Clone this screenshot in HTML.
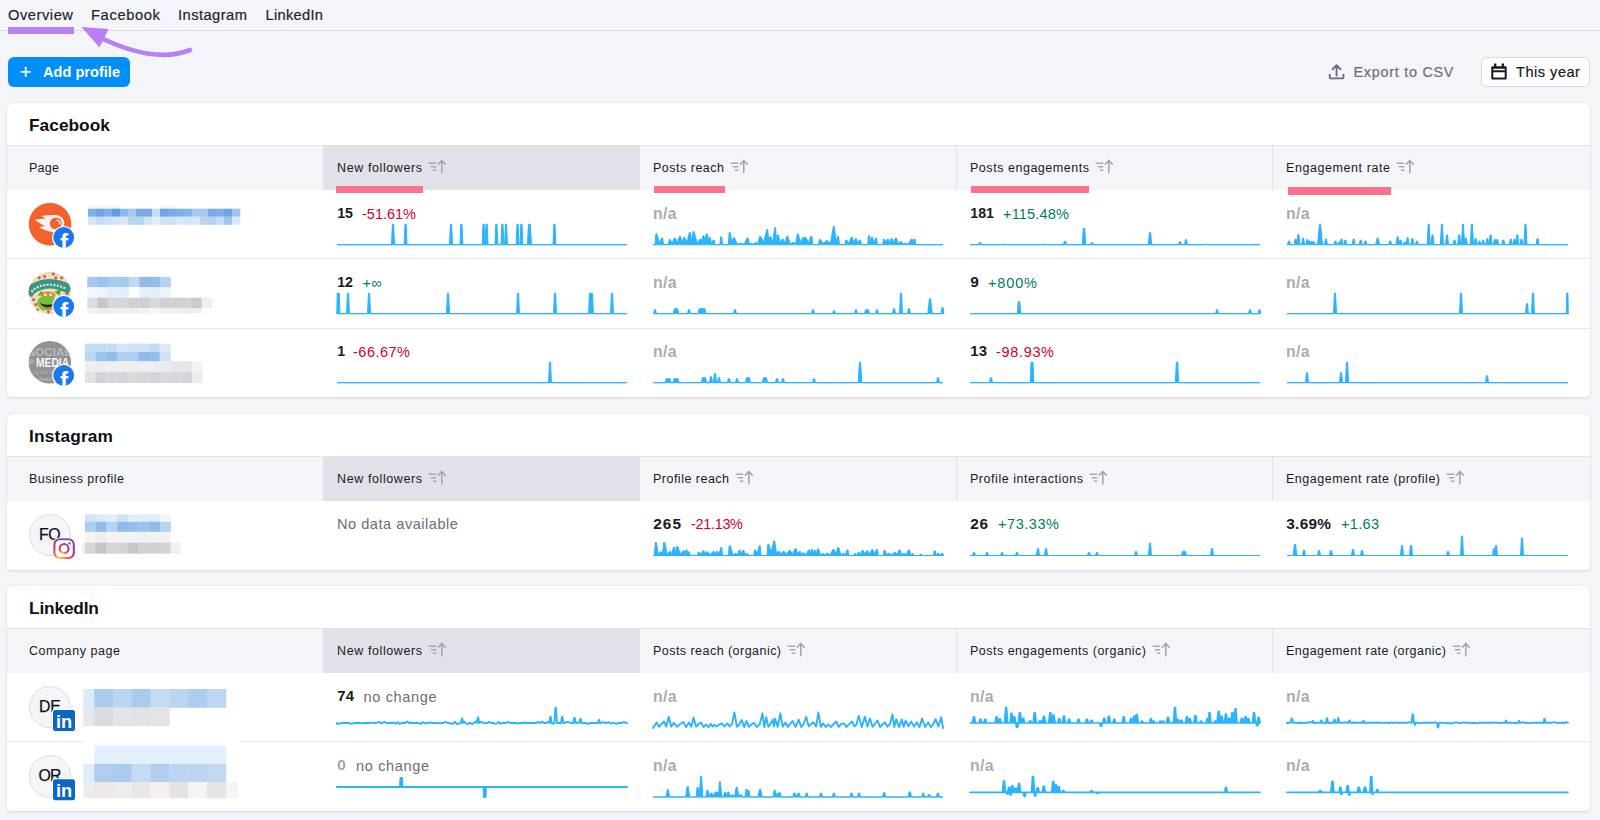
<!DOCTYPE html>
<html lang="en">
<head>
<meta charset="utf-8">
<title>Social Analytics Overview</title>
<style>
html,body{margin:0;padding:0;}
body{width:1600px;height:820px;position:relative;overflow:hidden;background:#f4f5f9;font-family:"Liberation Sans",sans-serif;color:#191b23;}
.t{position:absolute;white-space:nowrap;line-height:20px;height:20px;}
.b{position:absolute;}
.med{-webkit-text-stroke:0.2px currentColor;}
.ini{-webkit-text-stroke:0.25px #0f1015;}
.card{position:absolute;background:#fff;border-radius:6px 6px 4px 4px;box-shadow:0 1px 3px rgba(25,27,35,.13),0 0 1px rgba(25,27,35,.08);}
svg{position:absolute;overflow:visible;}
</style>
</head>
<body>
<div class="b" style="left:0px;top:30px;width:1600px;height:1px;background:#d9dbe1;"></div>
<span class="t med" style="left:8px;top:5.3px;font-size:14.7px;color:#23252e;letter-spacing:0.534px;">Overview</span>
<span class="t med" style="left:91px;top:5.3px;font-size:14.7px;color:#23252e;letter-spacing:0.635px;">Facebook</span>
<span class="t med" style="left:178px;top:5.3px;font-size:14.7px;color:#23252e;letter-spacing:0.455px;">Instagram</span>
<span class="t med" style="left:265.5px;top:5.3px;font-size:14.7px;color:#23252e;letter-spacing:0.275px;">LinkedIn</span>
<div class="b" style="left:8px;top:27px;width:66px;height:6.5px;background:#b880f6;"></div>
<svg style="left:70px;top:20px" width="130" height="40" viewBox="70 20 130 40"><path d="M190,50 C160,62 125,50 97,36" fill="none" stroke="#b880f6" stroke-width="4.6" stroke-linecap="round"/><path d="M81.5,27 L108.5,29 L99.5,47.5 Z" fill="#b880f6"/></svg>
<div class="b" style="left:8px;top:57px;width:122px;height:30px;background:#008ff8;border-radius:6px;"></div>
<svg style="left:19px;top:65px" width="12" height="12" viewBox="-0.7 -0.8 12 12"><path d="M6,1 V11 M1,6 H11" stroke="#fff" stroke-width="1.8" fill="none"/></svg>
<span class="t " style="left:43px;top:62px;font-size:14.5px;color:#fff;font-weight:700;letter-spacing:0.048px;">Add profile</span>
<svg style="left:1327px;top:62px" width="20" height="20" viewBox="0 0 20 20"><path d="M9.55,13.6 V3.6 M5.5,7.2 L9.55,3.2 L13.6,7.2 M2.7,12.6 V15.4 Q2.7,16.4 3.7,16.4 H15.4 Q16.4,16.4 16.4,15.4 V12.6" fill="none" stroke="#6c6e79" stroke-width="1.9" stroke-linecap="round" stroke-linejoin="round"/></svg>
<span class="t med" style="left:1353.5px;top:62px;font-size:14.4px;color:#6c6e79;letter-spacing:0.730px;">Export to CSV</span>
<div class="b" style="left:1481px;top:57px;width:108.6px;height:30px;background:#fff;border-radius:6px;box-sizing:border-box;border:1px solid #dcdde4;"></div>
<svg style="left:1490px;top:62px" width="18" height="18" viewBox="0 0 18 18"><path d="M2.3,5.3 H15.7 V16.4 H2.3 Z M2.3,9.2 H15.7" fill="none" stroke="#191b23" stroke-width="2" stroke-linejoin="round"/><path d="M5.2,1.6 V5 M12.8,1.6 V5" stroke="#191b23" stroke-width="2.3" fill="none"/><rect x="2.3" y="5.3" width="13.4" height="1.4" fill="#191b23"/></svg>
<span class="t med" style="left:1516px;top:62px;font-size:14.6px;color:#191b23;letter-spacing:0.495px;">This year</span>
<div class="card" style="left:7px;top:103px;width:1583px;height:294px"></div>
<span class="t " style="left:29px;top:115.4px;font-size:17.3px;color:#0e0f14;font-weight:700;letter-spacing:0.035px;">Facebook</span>
<div class="b" style="left:7px;top:145px;width:1583px;height:45px;background:#e0e1e9;"></div>
<div class="b" style="left:7px;top:146px;width:1583px;height:44px;background:#f4f5f9;"></div>
<div class="b" style="left:323px;top:146px;width:317px;height:44px;background:#e0e1e9;"></div>
<div class="b" style="left:956px;top:146px;width:1px;height:44px;background:#e0e1e9;"></div>
<div class="b" style="left:1272px;top:146px;width:1px;height:44px;background:#e0e1e9;"></div>
<span class="t " style="left:29px;top:158px;font-size:12.5px;color:#191b23;letter-spacing:0.269px;">Page</span>
<span class="t " style="left:337px;top:158px;font-size:12.5px;color:#191b23;letter-spacing:0.600px;">New followers</span>
<svg style="left:428px;top:158px" width="18" height="16" viewBox="-0.3 -0.6 18 16"><path d="M0.4,4.6 H8 M2.5,8.2 H8 M4.6,11.7 H8" stroke="#a6a9b4" stroke-width="1.6" fill="none"/><path d="M13.5,14.2 V2 M10,5.6 L13.5,1.8 L17,5.6" stroke="#a0a3af" stroke-width="1.5" fill="none" stroke-linecap="round" stroke-linejoin="round"/></svg>
<span class="t " style="left:653px;top:158px;font-size:12.5px;color:#191b23;letter-spacing:0.500px;">Posts reach</span>
<svg style="left:730px;top:158px" width="18" height="16" viewBox="-0.3 -0.6 18 16"><path d="M0.4,4.6 H8 M2.5,8.2 H8 M4.6,11.7 H8" stroke="#a6a9b4" stroke-width="1.6" fill="none"/><path d="M13.5,14.2 V2 M10,5.6 L13.5,1.8 L17,5.6" stroke="#a0a3af" stroke-width="1.5" fill="none" stroke-linecap="round" stroke-linejoin="round"/></svg>
<span class="t " style="left:970px;top:158px;font-size:12.5px;color:#191b23;letter-spacing:0.532px;">Posts engagements</span>
<svg style="left:1095px;top:158px" width="18" height="16" viewBox="-0.3 -0.6 18 16"><path d="M0.4,4.6 H8 M2.5,8.2 H8 M4.6,11.7 H8" stroke="#a6a9b4" stroke-width="1.6" fill="none"/><path d="M13.5,14.2 V2 M10,5.6 L13.5,1.8 L17,5.6" stroke="#a0a3af" stroke-width="1.5" fill="none" stroke-linecap="round" stroke-linejoin="round"/></svg>
<span class="t " style="left:1286px;top:158px;font-size:12.5px;color:#191b23;letter-spacing:0.579px;">Engagement rate</span>
<svg style="left:1396px;top:158px" width="18" height="16" viewBox="-0.3 -0.6 18 16"><path d="M0.4,4.6 H8 M2.5,8.2 H8 M4.6,11.7 H8" stroke="#a6a9b4" stroke-width="1.6" fill="none"/><path d="M13.5,14.2 V2 M10,5.6 L13.5,1.8 L17,5.6" stroke="#a0a3af" stroke-width="1.5" fill="none" stroke-linecap="round" stroke-linejoin="round"/></svg>
<div class="b" style="left:336px;top:185.7px;width:86.5px;height:7.3px;background:#fc728b;"></div>
<div class="b" style="left:654px;top:186px;width:71px;height:7.3px;background:#fc728b;"></div>
<div class="b" style="left:971px;top:186px;width:117.8px;height:7.3px;background:#fc728b;"></div>
<div class="b" style="left:1288px;top:187.4px;width:103.3px;height:7.3px;background:#fc728b;"></div>
<div class="b" style="left:7px;top:258px;width:1583px;height:1px;background:#e6e7ec;"></div>
<div class="b" style="left:7px;top:328px;width:1583px;height:1px;background:#e6e7ec;"></div>
<svg style="left:28px;top:202px" width="42.6" height="42.6" viewBox="-0.7 -0.8 42.6 42.6"><circle cx="21.3" cy="21.3" r="21.3" fill="#f4622c"/><path d="M12.4,13.2 C18,12.2 23,12 27.1,12.1 L25,29.4 C19.5,29 14,27.2 10.6,24.5 L16.1,23 C12,21.5 9,19.5 6.2,16.8 L16.8,15.7 Z" fill="#f1f1f3"/><circle cx="27.1" cy="20.8" r="8.6" fill="#f1f1f3"/><circle cx="27.1" cy="20.8" r="6" fill="#f4622c"/><path d="M28.3,17.3 C30.3,17.9 31.3,19.5 31.5,21.2" fill="none" stroke="#f6f0ee" stroke-width="1.3" stroke-linecap="round"/></svg>
<svg style="left:28px;top:271px" width="42.6" height="42.6" viewBox="-0.5 -0.8 42.6 42.6"><defs><clipPath id="tmc"><circle cx="21.3" cy="21.3" r="21.3"/></clipPath></defs><g clip-path="url(#tmc)"><rect width="43" height="43" fill="#ece0b8"/><circle cx="10.7" cy="6" r="1.6" fill="#d4604f"/><circle cx="16.2" cy="4.7" r="1.6" fill="#d4604f"/><circle cx="24.8" cy="2.1" r="1.6" fill="#d4604f"/><circle cx="27.3" cy="6" r="1.6" fill="#d4604f"/><circle cx="33.3" cy="6" r="1.6" fill="#d4604f"/><circle cx="5.1" cy="27.8" r="1.6" fill="#d4604f"/><circle cx="7.3" cy="32.9" r="1.6" fill="#d4604f"/><circle cx="14.5" cy="37.1" r="1.6" fill="#d4604f"/><circle cx="3" cy="23.5" r="1.6" fill="#d4604f"/><circle cx="37" cy="30" r="1.6" fill="#d4604f"/><circle cx="30" cy="38" r="1.6" fill="#d4604f"/><circle cx="20" cy="40" r="1.6" fill="#d4604f"/><circle cx="38.5" cy="22" r="1.6" fill="#d4604f"/><circle cx="33" cy="26" r="1.6" fill="#d4604f"/><circle cx="9" cy="38" r="1.6" fill="#d4604f"/><path d="M-1,22 C8,11 24,8 42,18" fill="none" stroke="#3d9485" stroke-width="9.5"/><path d="M3,20 C10,12.5 23,10 38,17" fill="none" stroke="#d6eadb" stroke-width="2.2" stroke-dasharray="2 1.4"/><path d="M9,24 L13,19 L17,23 Z M26,20 L33,17 L31,24 Z" fill="#5aa53a"/><ellipse cx="19.5" cy="23.2" rx="7.5" ry="3.6" fill="#e2863c"/><ellipse cx="18.5" cy="31" rx="10" ry="7.6" fill="#78c038"/><path d="M11.5,31 C15,37.5 23,37.5 27,31 C22,33.5 16,33.5 11.5,31 Z" fill="#2b2a18"/><path d="M15.5,35.3 C18,36.8 21,36.8 23.5,35.3" stroke="#e8705a" stroke-width="1.3" fill="none"/><circle cx="16.8" cy="23" r="1.3" fill="#fff"/><circle cx="22.2" cy="23" r="1.3" fill="#fff"/></g></svg>
<svg style="left:28px;top:341px" width="42.6" height="42.6" viewBox="-0.5 0 42.6 42.6"><defs><clipPath id="mdc"><circle cx="21.3" cy="21.3" r="21.3"/></clipPath></defs><g clip-path="url(#mdc)" font-family="Liberation Sans, sans-serif" font-weight="700"><rect width="43" height="43" fill="#929295"/><text x="-1" y="14.6" font-size="11.5" fill="#b9b9bc" textLength="44" lengthAdjust="spacingAndGlyphs">SOCIAL</text><text x="7.6" y="25.6" font-size="12.4" fill="#f7f7f8" textLength="33" lengthAdjust="spacingAndGlyphs">MEDIA</text><text x="0" y="22.5" font-size="6" fill="#c4c4c7">@</text><text x="4" y="33" font-size="5.5" fill="#a9a9ac" textLength="26" lengthAdjust="spacingAndGlyphs">tag web blog</text><text x="6" y="40" font-size="6" fill="#b3b3b6" textLength="22" lengthAdjust="spacingAndGlyphs">share</text></g></svg>
<svg style="left:51px;top:225px" width="24" height="24" viewBox="-0.7 -0.5 24 24"><defs><clipPath id="fbc237"><circle cx="12" cy="12" r="10.4"/></clipPath></defs><circle cx="12" cy="12" r="11.6" fill="#fff"/><circle cx="12" cy="12" r="10.4" fill="#1877f2"/><text clip-path="url(#fbc237)" x="12.5" y="25" font-family="Liberation Sans, sans-serif" font-weight="700" font-size="24.5" fill="#fff" text-anchor="middle">f</text></svg>
<svg style="left:51px;top:294px" width="24" height="24" viewBox="-0.7 -0.5 24 24"><defs><clipPath id="fbc306"><circle cx="12" cy="12" r="10.4"/></clipPath></defs><circle cx="12" cy="12" r="11.6" fill="#fff"/><circle cx="12" cy="12" r="10.4" fill="#1877f2"/><text clip-path="url(#fbc306)" x="12.5" y="25" font-family="Liberation Sans, sans-serif" font-weight="700" font-size="24.5" fill="#fff" text-anchor="middle">f</text></svg>
<svg style="left:51px;top:363px" width="24" height="24" viewBox="-0.7 -0.5 24 24"><defs><clipPath id="fbc375"><circle cx="12" cy="12" r="10.4"/></clipPath></defs><circle cx="12" cy="12" r="11.6" fill="#fff"/><circle cx="12" cy="12" r="10.4" fill="#1877f2"/><text clip-path="url(#fbc375)" x="12.5" y="25" font-family="Liberation Sans, sans-serif" font-weight="700" font-size="24.5" fill="#fff" text-anchor="middle">f</text></svg>
<svg style="left:88px;top:206px;filter:blur(0.5px)" width="152" height="18.3" viewBox="0 -0.2 152 18.3"><rect x="0" y="0" width="8.3" height="2.8" fill="#f1f6fc"/><rect x="8" y="0" width="8.3" height="2.8" fill="#f1f6fc"/><rect x="16" y="0" width="8.3" height="2.8" fill="#f1f6fc"/><rect x="24" y="0" width="8.3" height="2.8" fill="#f1f6fc"/><rect x="72" y="0" width="8.3" height="2.8" fill="#f1f6fc"/><rect x="80" y="0" width="8.3" height="2.8" fill="#f1f6fc"/><rect x="0" y="2.5" width="8.3" height="8.2" fill="#7fb0e8"/><rect x="8" y="2.5" width="8.3" height="8.2" fill="#6fa5e4"/><rect x="16" y="2.5" width="8.3" height="8.2" fill="#7db0e8"/><rect x="24" y="2.5" width="8.3" height="8.2" fill="#5f9be0"/><rect x="32" y="2.5" width="8.3" height="8.2" fill="#8ab8ea"/><rect x="40" y="2.5" width="8.3" height="8.2" fill="#a5c8ef"/><rect x="48" y="2.5" width="8.3" height="8.2" fill="#7aade6"/><rect x="56" y="2.5" width="8.3" height="8.2" fill="#78abe5"/><rect x="64" y="2.5" width="8.3" height="8.2" fill="#c5dcf5"/><rect x="72" y="2.5" width="8.3" height="8.2" fill="#6fa5e4"/><rect x="80" y="2.5" width="8.3" height="8.2" fill="#7aade6"/><rect x="88" y="2.5" width="8.3" height="8.2" fill="#7fb0e8"/><rect x="96" y="2.5" width="8.3" height="8.2" fill="#85b4e9"/><rect x="104" y="2.5" width="8.3" height="8.2" fill="#a8caf0"/><rect x="112" y="2.5" width="8.3" height="8.2" fill="#a5c8ef"/><rect x="120" y="2.5" width="8.3" height="8.2" fill="#7aade6"/><rect x="128" y="2.5" width="8.3" height="8.2" fill="#7fb0e8"/><rect x="136" y="2.5" width="8.3" height="8.2" fill="#6fa5e4"/><rect x="144" y="2.5" width="8.3" height="8.2" fill="#9fc4ee"/><rect x="0" y="10.4" width="8.3" height="8.2" fill="#d3e4f7"/><rect x="8" y="10.4" width="8.3" height="8.2" fill="#c6dcf5"/><rect x="16" y="10.4" width="8.3" height="8.2" fill="#cfe1f6"/><rect x="24" y="10.4" width="8.3" height="8.2" fill="#d3e4f7"/><rect x="32" y="10.4" width="8.3" height="8.2" fill="#d9e8f8"/><rect x="40" y="10.4" width="8.3" height="8.2" fill="#bcd5f2"/><rect x="48" y="10.4" width="8.3" height="8.2" fill="#b8d3f2"/><rect x="56" y="10.4" width="8.3" height="8.2" fill="#d3e4f7"/><rect x="64" y="10.4" width="8.3" height="8.2" fill="#e4eefa"/><rect x="72" y="10.4" width="8.3" height="8.2" fill="#cfe1f6"/><rect x="80" y="10.4" width="8.3" height="8.2" fill="#cfe1f6"/><rect x="88" y="10.4" width="8.3" height="8.2" fill="#d9e8f8"/><rect x="96" y="10.4" width="8.3" height="8.2" fill="#d3e4f7"/><rect x="104" y="10.4" width="8.3" height="8.2" fill="#d9e8f8"/><rect x="112" y="10.4" width="8.3" height="8.2" fill="#bcd5f2"/><rect x="120" y="10.4" width="8.3" height="8.2" fill="#b5d0f0"/><rect x="128" y="10.4" width="8.3" height="8.2" fill="#c6dcf5"/><rect x="136" y="10.4" width="8.3" height="8.2" fill="#9fc4ee"/><rect x="144" y="10.4" width="8.3" height="8.2" fill="#d9e8f8"/></svg>
<svg style="left:87px;top:276px;filter:blur(0.5px)" width="124.8" height="36.5" viewBox="-0.3 -0.8 124.8 36.5"><rect x="0" y="0" width="10.7" height="10.7" fill="#a5c8ef"/><rect x="10.4" y="0" width="10.7" height="10.7" fill="#9ac2ec"/><rect x="20.8" y="0" width="10.7" height="10.7" fill="#a5ccee"/><rect x="31.2" y="0" width="10.7" height="10.7" fill="#a5ccee"/><rect x="41.6" y="0" width="10.7" height="10.7" fill="#bfd9f3"/><rect x="52" y="0" width="10.7" height="10.7" fill="#90bbe9"/><rect x="62.4" y="0" width="10.7" height="10.7" fill="#93bdea"/><rect x="72.8" y="0" width="10.7" height="10.7" fill="#b5d2f0"/><rect x="0" y="10.4" width="10.7" height="10.8" fill="#f3f7fc"/><rect x="10.4" y="10.4" width="10.7" height="10.8" fill="#eef4fb"/><rect x="20.8" y="10.4" width="10.7" height="10.8" fill="#e4eefa"/><rect x="31.2" y="10.4" width="10.7" height="10.8" fill="#e4eefa"/><rect x="41.6" y="10.4" width="10.7" height="10.8" fill="#ffffff"/><rect x="52" y="10.4" width="10.7" height="10.8" fill="#e6f0fa"/><rect x="62.4" y="10.4" width="10.7" height="10.8" fill="#e4eefa"/><rect x="72.8" y="10.4" width="10.7" height="10.8" fill="#eef4fb"/><rect x="0" y="20.9" width="10.7" height="10.9" fill="#dcdde1"/><rect x="10.4" y="20.9" width="10.7" height="10.9" fill="#c6c7cd"/><rect x="20.8" y="20.9" width="10.7" height="10.9" fill="#d5d6da"/><rect x="31.2" y="20.9" width="10.7" height="10.9" fill="#d5d6da"/><rect x="41.6" y="20.9" width="10.7" height="10.9" fill="#cfd0d5"/><rect x="52" y="20.9" width="10.7" height="10.9" fill="#cfd0d5"/><rect x="62.4" y="20.9" width="10.7" height="10.9" fill="#d8d9dd"/><rect x="72.8" y="20.9" width="10.7" height="10.9" fill="#d0d1d6"/><rect x="83.2" y="20.9" width="10.7" height="10.9" fill="#d0d1d6"/><rect x="93.6" y="20.9" width="10.7" height="10.9" fill="#d3d4d9"/><rect x="104" y="20.9" width="10.7" height="10.9" fill="#cacbd1"/><rect x="114.4" y="20.9" width="10.7" height="10.9" fill="#efeff3"/><rect x="0" y="31.5" width="10.7" height="5.3" fill="#f1f2f5"/><rect x="10.4" y="31.5" width="10.7" height="5.3" fill="#ecedf1"/><rect x="20.8" y="31.5" width="10.7" height="5.3" fill="#eef0f4"/><rect x="31.2" y="31.5" width="10.7" height="5.3" fill="#eef0f4"/><rect x="41.6" y="31.5" width="10.7" height="5.3" fill="#eef0f4"/><rect x="52" y="31.5" width="10.7" height="5.3" fill="#f1f2f5"/><rect x="62.4" y="31.5" width="10.7" height="5.3" fill="#f6f6f8"/><rect x="72.8" y="31.5" width="10.7" height="5.3" fill="#eef0f4"/><rect x="83.2" y="31.5" width="10.7" height="5.3" fill="#eef0f4"/><rect x="93.6" y="31.5" width="10.7" height="5.3" fill="#ecedf1"/><rect x="104" y="31.5" width="10.7" height="5.3" fill="#eef0f4"/></svg>
<svg style="left:84px;top:343px;filter:blur(0.5px)" width="117.7" height="39.2" viewBox="-0.8 -0.6 117.7 39.2"><rect x="0" y="0" width="11" height="8.7" fill="#c3dbf4"/><rect x="10.7" y="0" width="11" height="8.7" fill="#c3dbf4"/><rect x="21.4" y="0" width="11" height="8.7" fill="#c5dcf5"/><rect x="32.1" y="0" width="11" height="8.7" fill="#d6e6f8"/><rect x="42.8" y="0" width="11" height="8.7" fill="#cfe2f6"/><rect x="53.5" y="0" width="11" height="8.7" fill="#cfe2f6"/><rect x="64.2" y="0" width="11" height="8.7" fill="#c3dbf4"/><rect x="74.9" y="0" width="11" height="8.7" fill="#dfeaf9"/><rect x="0" y="8.4" width="11" height="9.6" fill="#bdd7f3"/><rect x="10.7" y="8.4" width="11" height="9.6" fill="#9cc3ec"/><rect x="21.4" y="8.4" width="11" height="9.6" fill="#8fbce9"/><rect x="32.1" y="8.4" width="11" height="9.6" fill="#b1cff0"/><rect x="42.8" y="8.4" width="11" height="9.6" fill="#b1cff0"/><rect x="53.5" y="8.4" width="11" height="9.6" fill="#8fbce9"/><rect x="64.2" y="8.4" width="11" height="9.6" fill="#93bdea"/><rect x="74.9" y="8.4" width="11" height="9.6" fill="#cfe2f6"/><rect x="0" y="17.7" width="11" height="11.2" fill="#eeeef1"/><rect x="10.7" y="17.7" width="11" height="11.2" fill="#ededf0"/><rect x="21.4" y="17.7" width="11" height="11.2" fill="#efedee"/><rect x="32.1" y="17.7" width="11" height="11.2" fill="#eeeef1"/><rect x="42.8" y="17.7" width="11" height="11.2" fill="#eeeef1"/><rect x="53.5" y="17.7" width="11" height="11.2" fill="#f0eeee"/><rect x="64.2" y="17.7" width="11" height="11.2" fill="#ededf0"/><rect x="74.9" y="17.7" width="11" height="11.2" fill="#ebebee"/><rect x="85.6" y="17.7" width="11" height="11.2" fill="#e6e6ea"/><rect x="96.3" y="17.7" width="11" height="11.2" fill="#e6e6ea"/><rect x="107" y="17.7" width="11" height="11.2" fill="#f3f3f6"/><rect x="0" y="28.6" width="11" height="10.9" fill="#e1e2e6"/><rect x="10.7" y="28.6" width="11" height="10.9" fill="#d3d4d9"/><rect x="21.4" y="28.6" width="11" height="10.9" fill="#d6d7dc"/><rect x="32.1" y="28.6" width="11" height="10.9" fill="#d3d4d9"/><rect x="42.8" y="28.6" width="11" height="10.9" fill="#d9dade"/><rect x="53.5" y="28.6" width="11" height="10.9" fill="#d6d7dc"/><rect x="64.2" y="28.6" width="11" height="10.9" fill="#d3d4d9"/><rect x="74.9" y="28.6" width="11" height="10.9" fill="#d9dade"/><rect x="85.6" y="28.6" width="11" height="10.9" fill="#d6d7dc"/><rect x="96.3" y="28.6" width="11" height="10.9" fill="#d3d4d9"/><rect x="107" y="28.6" width="11" height="10.9" fill="#ececf0"/></svg>
<span class="t " style="left:337.3px;top:203.4px;font-size:14.2px;color:#191b23;font-weight:700;letter-spacing:-0.094px;">15</span>
<span class="t " style="left:362px;top:203.6px;font-size:14.5px;color:#d1002f;letter-spacing:-0.001px;">-51.61%</span>
<span class="t " style="left:337.3px;top:272.4px;font-size:14.2px;color:#191b23;font-weight:700;letter-spacing:-0.094px;">12</span>
<span class="t " style="left:362.5px;top:272.6px;font-size:14.5px;color:#007c65;letter-spacing:0.195px;">+∞</span>
<span class="t " style="left:337.3px;top:341.4px;font-size:14.2px;color:#191b23;font-weight:700;letter-spacing:-1.197px;">1</span>
<span class="t " style="left:353px;top:341.6px;font-size:14.5px;color:#d1002f;letter-spacing:0.499px;">-66.67%</span>
<span class="t " style="left:653px;top:204px;font-size:15.8px;color:#a9abb6;font-weight:700;letter-spacing:0.336px;">n/a</span>
<span class="t " style="left:1286px;top:204px;font-size:15.8px;color:#a9abb6;font-weight:700;letter-spacing:0.336px;">n/a</span>
<span class="t " style="left:653px;top:273px;font-size:15.8px;color:#a9abb6;font-weight:700;letter-spacing:0.336px;">n/a</span>
<span class="t " style="left:1286px;top:273px;font-size:15.8px;color:#a9abb6;font-weight:700;letter-spacing:0.336px;">n/a</span>
<span class="t " style="left:653px;top:342px;font-size:15.8px;color:#a9abb6;font-weight:700;letter-spacing:0.336px;">n/a</span>
<span class="t " style="left:1286px;top:342px;font-size:15.8px;color:#a9abb6;font-weight:700;letter-spacing:0.336px;">n/a</span>
<span class="t " style="left:970.3px;top:203.4px;font-size:14.2px;color:#191b23;font-weight:700;letter-spacing:0.005px;">181</span>
<span class="t " style="left:1003px;top:203.6px;font-size:14.5px;color:#007c65;letter-spacing:0.196px;">+115.48%</span>
<span class="t " style="left:970.3px;top:272.4px;font-size:15.4px;color:#191b23;font-weight:700;letter-spacing:0.136px;">9</span>
<span class="t " style="left:988px;top:272.6px;font-size:14.5px;color:#007c65;letter-spacing:0.862px;">+800%</span>
<span class="t " style="left:970.3px;top:341.4px;font-size:14.93px;color:#191b23;font-weight:700;letter-spacing:0.128px;">13</span>
<span class="t " style="left:996px;top:341.6px;font-size:14.5px;color:#d1002f;letter-spacing:0.666px;">-98.93%</span>
<svg style="left:337px;top:218px" width="290" height="36" viewBox="0 -26.7 290 36"><path d="M0,0 L54.5,0.0 L55.4,-20.5 L56.6,-20.5 L57.5,0.0 L67.1,0.0 L68.0,-20.5 L69.2,-20.5 L70.0,0.0 L112.5,0.0 L113.4,-20.5 L114.6,-20.5 L115.5,0.0 L123.0,0.0 L123.8,-20.5 L125.0,-20.5 L125.9,0.0 L145.2,0.0 L146.0,-20.5 L147.2,-20.5 L148.0,0.0 L148.2,0.0 L149.0,-20.5 L150.2,-20.5 L151.0,0.0 L158.0,0.0 L158.8,-20.5 L160.0,-20.5 L160.8,0.0 L164.0,0.0 L164.8,-20.5 L166.0,-20.5 L166.8,0.0 L167.6,0.0 L168.4,-20.5 L169.6,-20.5 L170.4,0.0 L179.2,0.0 L180.0,-20.5 L181.2,-20.5 L182.0,0.0 L183.0,0.0 L183.8,-20.5 L185.0,-20.5 L185.8,0.0 L190.4,0.0 L191.5,-20.5 L193.3,-20.5 L194.4,0.0 L216.0,0.0 L216.8,-20.5 L218.0,-20.5 L218.8,0.0 L290,0 Z" fill="#2bb3ff" stroke="#2bb3ff" stroke-width="1" stroke-linejoin="round"/></svg>
<svg style="left:653px;top:218px" width="290" height="36" viewBox="0 -26.7 290 36"><path d="M0,0 L2.1,0.0 L2.9,-10.8 L3.9,-10.8 L6.3,-2.0 L8.7,-6.6 L9.7,-6.6 L10.5,0.0 L15.4,0.0 L16.2,-5.2 L17.2,-5.2 L19.2,-1.6 L21.3,-6.6 L22.3,-6.6 L24.4,-2.0 L26.5,-8.4 L27.5,-8.4 L29.1,-2.2 L30.7,-7.5 L31.7,-7.5 L34.0,-2.2 L36.3,-12.2 L37.3,-12.2 L38.7,-3.7 L40.1,-13.1 L41.1,-13.1 L44.1,-1.7 L47.1,-5.6 L48.1,-5.6 L49.0,-1.7 L49.9,-8.9 L50.9,-8.9 L52.0,-2.7 L53.2,-10.8 L54.2,-10.8 L55.1,-2.2 L56.0,-7.5 L57.0,-7.5 L58.6,-1.4 L60.2,-4.7 L61.2,-4.7 L62.0,0.0 L66.9,0.0 L67.7,-8.0 L68.7,-8.0 L69.5,0.0 L75.4,0.0 L76.2,-12.2 L77.2,-12.2 L78.8,-2.1 L80.4,-7.0 L81.4,-7.0 L84.4,-0.4 L87.4,-1.4 L88.4,-1.4 L91.2,-0.4 L94.0,-6.6 L95.0,-6.6 L96.6,-0.4 L98.2,-1.4 L99.2,-1.4 L100.8,-0.4 L102.4,-2.3 L103.4,-2.3 L105.0,-0.7 L106.6,-8.4 L107.6,-8.4 L110.7,-2.5 L113.7,-15.0 L114.7,-15.0 L115.8,-2.4 L116.9,-8.0 L117.9,-8.0 L119.8,-2.4 L121.6,-16.9 L122.6,-16.9 L123.5,-2.9 L124.4,-9.8 L125.4,-9.8 L127.2,-1.7 L129.1,-5.6 L130.1,-5.6 L131.9,-1.7 L133.8,-8.4 L134.8,-8.4 L137.4,-0.7 L139.9,-2.3 L140.9,-2.3 L142.6,-0.7 L144.3,-10.8 L145.3,-10.8 L147.4,-2.1 L149.5,-7.0 L150.5,-7.0 L151.2,-2.1 L151.8,-7.5 L152.8,-7.5 L155.4,-2.2 L157.9,-8.4 L158.9,-8.4 L159.7,0.0 L165.5,0.0 L166.3,-5.2 L167.3,-5.2 L170.4,-1.3 L173.4,-4.2 L174.4,-4.2 L177.4,-1.3 L180.4,-18.3 L181.4,-18.3 L183.0,-2.5 L184.6,-8.4 L185.6,-8.4 L186.4,0.0 L191.8,0.0 L192.6,-4.7 L193.6,-4.7 L195.9,-1.4 L198.2,-7.5 L199.2,-7.5 L200.8,-1.8 L202.4,-6.1 L203.4,-6.1 L205.0,-1.4 L206.6,-4.7 L207.6,-4.7 L208.4,0.0 L214.7,0.0 L215.5,-8.9 L216.5,-8.9 L217.4,-2.2 L218.4,-7.5 L219.4,-7.5 L221.0,-2.0 L222.6,-6.6 L223.6,-6.6 L224.4,0.0 L229.7,0.0 L230.5,-5.6 L231.5,-5.6 L232.9,-1.7 L234.3,-5.6 L235.3,-5.6 L236.7,-1.7 L238.0,-6.1 L239.0,-6.1 L240.7,-1.8 L242.3,-6.6 L243.3,-6.6 L245.4,-1.0 L247.4,-3.3 L248.4,-3.3 L249.8,-0.4 L251.2,-1.4 L252.2,-1.4 L255.2,-0.4 L258.2,-5.6 L259.2,-5.6 L260.1,-1.7 L261.0,-5.6 L262.0,-5.6 L262.8,0.0 L290,0 Z" fill="#2bb3ff" stroke="#2bb3ff" stroke-width="1" stroke-linejoin="round"/></svg>
<svg style="left:970px;top:218px" width="290" height="36" viewBox="0 -26.7 290 36"><path d="M0,0 L8.6,0.0 L9.4,-2.2 L10.6,-2.2 L11.4,0.0 L33.0,0.0 L34.4,-0.6 L35.6,-0.6 L37.0,0.0 L73.0,0.0 L74.4,-0.6 L75.6,-0.6 L77.0,0.0 L93.5,0.0 L94.4,-3.5 L95.6,-3.5 L96.5,0.0 L112.3,0.0 L113.3,-16.5 L114.7,-16.5 L115.7,0.0 L120.5,0.0 L121.4,-2.0 L122.6,-2.0 L123.5,0.0 L178.4,0.0 L179.3,-12.0 L180.7,-12.0 L181.6,0.0 L208.6,0.0 L209.4,-3.0 L210.6,-3.0 L211.4,0.0 L214.6,0.0 L215.4,-5.0 L216.6,-5.0 L217.4,0.0 L234.0,0.0 L235.4,-0.6 L236.6,-0.6 L238.0,0.0 L290,0 Z" fill="#2bb3ff" stroke="#2bb3ff" stroke-width="1" stroke-linejoin="round"/></svg>
<svg style="left:1287px;top:218px" width="281" height="36" viewBox="0 -26.7 281 36"><path d="M0,0 L0.5,0.0 L1.5,-3.7 L2.5,-3.7 L3.5,0.0 L7.1,0.0 L8.1,-5.6 L9.1,-5.6 L10.0,-1.2 L10.9,-10.3 L11.9,-10.3 L12.9,0.0 L14.6,0.0 L15.6,-6.6 L16.6,-6.6 L17.6,0.0 L18.8,0.0 L19.8,-5.2 L20.8,-5.2 L21.5,-0.8 L22.1,-3.7 L23.1,-3.7 L23.8,-0.7 L24.5,-3.3 L25.5,-3.3 L25.9,-0.6 L26.4,-2.8 L27.4,-2.8 L28.4,0.0 L30.5,0.0 L32.5,-20.6 L33.5,-20.6 L35.5,0.0 L37.5,0.0 L38.5,-5.6 L39.5,-5.6 L40.5,0.0 L46.9,0.0 L47.9,-3.7 L48.9,-3.7 L49.9,0.0 L50.7,0.0 L51.7,-2.8 L52.7,-2.8 L53.4,-0.6 L54.0,-5.6 L55.0,-5.6 L56.0,0.0 L56.8,0.0 L57.8,-4.7 L58.8,-4.7 L59.8,0.0 L65.2,0.0 L66.2,-5.6 L67.2,-5.6 L68.2,0.0 L72.2,0.0 L73.2,-4.7 L74.2,-4.7 L75.2,0.0 L76.9,0.0 L77.9,-3.7 L78.9,-3.7 L79.9,0.0 L88.6,0.0 L90.1,-6.6 L91.1,-6.6 L92.6,0.0 L101.7,0.0 L102.7,-3.7 L103.7,-3.7 L104.7,0.0 L109.2,0.0 L110.2,-8.0 L111.2,-8.0 L112.2,-1.0 L113.1,-4.7 L114.1,-4.7 L115.1,0.0 L116.3,0.0 L117.3,-2.8 L118.3,-2.8 L119.2,-0.6 L120.1,-7.0 L121.1,-7.0 L122.1,0.0 L123.8,0.0 L124.8,-6.1 L125.8,-6.1 L126.8,0.0 L128.5,0.0 L129.5,-3.7 L130.5,-3.7 L131.5,0.0 L140.2,0.0 L141.2,-20.6 L142.2,-20.6 L143.2,0.0 L144.0,0.0 L145.0,-9.8 L146.0,-9.8 L147.0,0.0 L153.4,0.0 L154.4,-20.6 L155.4,-20.6 L156.4,0.0 L158.5,0.0 L159.5,-9.8 L160.5,-9.8 L161.5,0.0 L166.0,0.0 L167.0,-4.7 L168.0,-4.7 L169.0,0.0 L170.7,0.0 L171.7,-9.8 L172.7,-9.8 L173.7,0.0 L174.5,0.0 L175.5,-20.6 L176.5,-20.6 L177.4,-1.5 L178.3,-6.6 L179.3,-6.6 L180.3,0.0 L183.4,0.0 L184.4,-20.6 L185.4,-20.6 L186.4,0.0 L187.1,0.0 L188.1,-6.1 L189.1,-6.1 L190.1,0.0 L190.9,0.0 L191.9,-3.7 L192.9,-3.7 L193.9,0.0 L194.6,0.0 L195.6,-4.7 L196.6,-4.7 L197.6,0.0 L198.8,0.0 L199.8,-6.1 L200.8,-6.1 L201.8,0.0 L202.1,0.0 L203.1,-9.8 L204.1,-9.8 L205.1,0.0 L206.3,0.0 L207.3,-5.2 L208.3,-5.2 L209.0,-1.1 L209.7,-5.2 L210.7,-5.2 L211.7,0.0 L214.8,0.0 L215.8,-4.7 L216.8,-4.7 L217.8,0.0 L222.3,0.0 L223.3,-5.6 L224.3,-5.6 L225.3,0.0 L226.0,0.0 L227.0,-5.6 L228.0,-5.6 L228.9,-1.2 L229.8,-9.8 L230.8,-9.8 L231.8,0.0 L233.0,0.0 L234.0,-5.6 L235.0,-5.6 L236.0,0.0 L237.0,0.0 L238.0,-20.6 L239.0,-20.6 L240.0,0.0 L249.0,0.0 L250.0,-6.1 L251.0,-6.1 L252.0,0.0 L281,0 Z" fill="#2bb3ff" stroke="#2bb3ff" stroke-width="1" stroke-linejoin="round"/></svg>
<svg style="left:337px;top:287px" width="290" height="36" viewBox="0 -26.7 290 36"><path d="M0,0 L-0.2,0.0 L0.2,-20.5 L2.4,-20.5 L2.8,0.0 L9.6,0.0 L10.4,-20.5 L11.6,-20.5 L12.4,0.0 L30.6,0.0 L31.4,-20.5 L32.6,-20.5 L33.5,0.0 L109.5,0.0 L110.4,-20.5 L111.6,-20.5 L112.5,0.0 L179.6,0.0 L180.4,-20.5 L181.6,-20.5 L182.4,0.0 L216.6,0.0 L217.4,-20.5 L218.6,-20.5 L219.4,0.0 L251.7,0.0 L252.4,-20.5 L255.6,-20.5 L256.3,0.0 L273.6,0.0 L274.4,-20.5 L275.6,-20.5 L276.4,0.0 L290,0 Z" fill="#2bb3ff" stroke="#2bb3ff" stroke-width="1" stroke-linejoin="round"/></svg>
<svg style="left:653px;top:287px" width="290" height="36" viewBox="0 -26.7 290 36"><path d="M0,0 L0.6,0.0 L1.4,-4.0 L2.6,-4.0 L3.5,0.0 L20.2,0.0 L21.5,-5.0 L24.5,-5.0 L25.8,0.0 L34.5,0.0 L35.4,-4.0 L36.6,-4.0 L37.5,0.0 L45.0,0.0 L46.2,-5.0 L51.8,-5.0 L53.0,0.0 L80.5,0.0 L81.4,-4.0 L82.6,-4.0 L83.5,0.0 L158.6,0.0 L159.4,-4.0 L160.6,-4.0 L161.4,0.0 L179.6,0.0 L180.4,-3.0 L181.6,-3.0 L182.4,0.0 L201.6,0.0 L202.4,-4.0 L203.6,-4.0 L204.4,0.0 L211.5,0.0 L212.5,-4.0 L215.5,-4.0 L216.5,0.0 L222.6,0.0 L223.4,-4.0 L224.6,-4.0 L225.4,0.0 L239.6,0.0 L240.4,-5.0 L241.6,-5.0 L242.4,0.0 L246.6,0.0 L247.4,-20.5 L248.6,-20.5 L249.4,0.0 L254.6,0.0 L255.4,-5.0 L256.6,-5.0 L257.4,0.0 L274.8,0.0 L276.4,-15.0 L277.6,-15.0 L279.2,0.0 L288.2,0.0 L288.9,-6.0 L290.1,-6.0 L290.8,0.0 L290,0 Z" fill="#2bb3ff" stroke="#2bb3ff" stroke-width="1" stroke-linejoin="round"/></svg>
<svg style="left:970px;top:287px" width="290" height="36" viewBox="0 -26.7 290 36"><path d="M0,0 L47.3,0.0 L48.2,-12.0 L49.8,-12.0 L50.7,0.0 L245.6,0.0 L246.4,-4.0 L247.6,-4.0 L248.4,0.0 L278.6,0.0 L279.4,-4.0 L280.6,-4.0 L281.4,0.0 L288.5,0.0 L288.9,-4.0 L290.1,-4.0 L290.5,0.0 L290,0 Z" fill="#2bb3ff" stroke="#2bb3ff" stroke-width="1" stroke-linejoin="round"/></svg>
<svg style="left:1287px;top:287px" width="281" height="36" viewBox="0 -26.7 281 36"><path d="M0,0 L46.5,0.0 L47.4,-20.5 L48.6,-20.5 L49.5,0.0 L172.6,0.0 L173.4,-20.5 L174.6,-20.5 L175.4,0.0 L238.6,0.0 L239.4,-10.0 L240.6,-10.0 L241.4,0.0 L244.6,0.0 L245.4,-20.5 L246.6,-20.5 L247.4,0.0 L279.3,0.0 L279.7,-20.5 L280.9,-20.5 L281.3,0.0 L281,0 Z" fill="#2bb3ff" stroke="#2bb3ff" stroke-width="1" stroke-linejoin="round"/></svg>
<svg style="left:337px;top:356px" width="290" height="36" viewBox="0 -26.7 290 36"><path d="M0,0 L211.6,0.0 L212.4,-20.5 L213.6,-20.5 L214.4,0.0 L290,0 Z" fill="#2bb3ff" stroke="#2bb3ff" stroke-width="1" stroke-linejoin="round"/></svg>
<svg style="left:653px;top:356px" width="290" height="36" viewBox="0 -26.7 290 36"><path d="M0,0 L12.0,0.0 L13.0,-4.0 L17.0,-4.0 L18.0,0.0 L20.0,0.0 L21.0,-4.0 L25.0,-4.0 L26.0,0.0 L48.5,0.0 L49.5,-5.0 L52.5,-5.0 L53.5,0.0 L56.5,0.0 L57.4,-6.0 L58.6,-6.0 L59.5,0.0 L60.5,0.0 L61.4,-9.0 L62.6,-9.0 L63.5,0.0 L64.5,0.0 L65.4,-5.0 L66.6,-5.0 L67.5,0.0 L74.5,0.0 L75.4,-4.0 L76.6,-4.0 L77.5,0.0 L82.5,0.0 L83.4,-4.0 L84.6,-4.0 L85.5,0.0 L92.5,0.0 L93.5,-5.0 L96.5,-5.0 L97.5,0.0 L109.5,0.0 L110.5,-5.0 L113.5,-5.0 L114.5,0.0 L122.5,0.0 L123.4,-4.0 L124.6,-4.0 L125.5,0.0 L128.6,0.0 L129.4,-4.0 L130.6,-4.0 L131.4,0.0 L159.6,0.0 L160.4,-4.0 L161.6,-4.0 L162.4,0.0 L205.2,0.0 L206.4,-20.5 L207.6,-20.5 L208.8,0.0 L283.6,0.0 L284.4,-5.0 L285.6,-5.0 L286.4,0.0 L290,0 Z" fill="#2bb3ff" stroke="#2bb3ff" stroke-width="1" stroke-linejoin="round"/></svg>
<svg style="left:970px;top:356px" width="290" height="36" viewBox="0 -26.7 290 36"><path d="M0,0 L19.6,0.0 L20.4,-5.0 L21.6,-5.0 L22.4,0.0 L60.2,0.0 L61.0,-20.5 L63.0,-20.5 L63.8,0.0 L205.4,0.0 L206.3,-20.5 L207.7,-20.5 L208.6,0.0 L290,0 Z" fill="#2bb3ff" stroke="#2bb3ff" stroke-width="1" stroke-linejoin="round"/></svg>
<svg style="left:1287px;top:356px" width="281" height="36" viewBox="0 -26.7 281 36"><path d="M0,0 L18.6,0.0 L19.4,-10.0 L20.6,-10.0 L21.4,0.0 L52.5,0.0 L53.4,-10.0 L54.6,-10.0 L55.5,0.0 L58.5,0.0 L59.4,-20.5 L60.6,-20.5 L61.5,0.0 L198.6,0.0 L199.4,-7.0 L200.6,-7.0 L201.4,0.0 L281,0 Z" fill="#2bb3ff" stroke="#2bb3ff" stroke-width="1" stroke-linejoin="round"/></svg>
<div class="card" style="left:7px;top:414px;width:1583px;height:156px"></div>
<span class="t " style="left:29px;top:426.4px;font-size:17.3px;color:#0e0f14;font-weight:700;letter-spacing:0.165px;">Instagram</span>
<div class="b" style="left:7px;top:456px;width:1583px;height:45px;background:#e0e1e9;"></div>
<div class="b" style="left:7px;top:457px;width:1583px;height:44px;background:#f4f5f9;"></div>
<div class="b" style="left:323px;top:457px;width:317px;height:44px;background:#e0e1e9;"></div>
<div class="b" style="left:956px;top:457px;width:1px;height:44px;background:#e0e1e9;"></div>
<div class="b" style="left:1272px;top:457px;width:1px;height:44px;background:#e0e1e9;"></div>
<span class="t " style="left:29px;top:469px;font-size:12.5px;color:#191b23;letter-spacing:0.451px;">Business profile</span>
<span class="t " style="left:337px;top:469px;font-size:12.5px;color:#191b23;letter-spacing:0.600px;">New followers</span>
<svg style="left:428px;top:469px" width="18" height="16" viewBox="-0.3 -0.6 18 16"><path d="M0.4,4.6 H8 M2.5,8.2 H8 M4.6,11.7 H8" stroke="#a6a9b4" stroke-width="1.6" fill="none"/><path d="M13.5,14.2 V2 M10,5.6 L13.5,1.8 L17,5.6" stroke="#a0a3af" stroke-width="1.5" fill="none" stroke-linecap="round" stroke-linejoin="round"/></svg>
<span class="t " style="left:653px;top:469px;font-size:12.5px;color:#191b23;letter-spacing:0.486px;">Profile reach</span>
<svg style="left:735px;top:469px" width="18" height="16" viewBox="-0.3 -0.6 18 16"><path d="M0.4,4.6 H8 M2.5,8.2 H8 M4.6,11.7 H8" stroke="#a6a9b4" stroke-width="1.6" fill="none"/><path d="M13.5,14.2 V2 M10,5.6 L13.5,1.8 L17,5.6" stroke="#a0a3af" stroke-width="1.5" fill="none" stroke-linecap="round" stroke-linejoin="round"/></svg>
<span class="t " style="left:970px;top:469px;font-size:12.5px;color:#191b23;letter-spacing:0.536px;">Profile interactions</span>
<svg style="left:1089px;top:469px" width="18" height="16" viewBox="-0.3 -0.6 18 16"><path d="M0.4,4.6 H8 M2.5,8.2 H8 M4.6,11.7 H8" stroke="#a6a9b4" stroke-width="1.6" fill="none"/><path d="M13.5,14.2 V2 M10,5.6 L13.5,1.8 L17,5.6" stroke="#a0a3af" stroke-width="1.5" fill="none" stroke-linecap="round" stroke-linejoin="round"/></svg>
<span class="t " style="left:1286px;top:469px;font-size:12.5px;color:#191b23;letter-spacing:0.511px;">Engagement rate (profile)</span>
<svg style="left:1446px;top:469px" width="18" height="16" viewBox="-0.3 -0.6 18 16"><path d="M0.4,4.6 H8 M2.5,8.2 H8 M4.6,11.7 H8" stroke="#a6a9b4" stroke-width="1.6" fill="none"/><path d="M13.5,14.2 V2 M10,5.6 L13.5,1.8 L17,5.6" stroke="#a0a3af" stroke-width="1.5" fill="none" stroke-linecap="round" stroke-linejoin="round"/></svg>
<div class="b" style="left:28.5px;top:513.8px;width:42.4px;height:42.4px;border-radius:50%;background:#f4f5f9;box-sizing:border-box;border:1px solid #dddee4"></div>
<span class="t ini" style="left:38.9px;top:524.6px;font-size:15.8px;color:#0f1015;letter-spacing:-0.341px;">FO</span>
<svg style="left:52px;top:537px" width="23" height="22" viewBox="-0.6 -0.6 23 22"><defs><radialGradient id="igg" cx="0.28" cy="1.05" r="1.25"><stop offset="0" stop-color="#fed576"/><stop offset="0.26" stop-color="#f47133"/><stop offset="0.5" stop-color="#e33062"/><stop offset="0.72" stop-color="#bc3081"/><stop offset="1" stop-color="#4c63d2"/></radialGradient></defs><rect x="0" y="0" width="23" height="22" rx="6.5" fill="#fff"/><rect x="1.8" y="1.6" width="19.4" height="18.8" rx="5.2" fill="none" stroke="url(#igg)" stroke-width="2.1"/><circle cx="11.5" cy="11" r="4.5" fill="none" stroke="url(#igg)" stroke-width="2"/><circle cx="16.9" cy="5.8" r="1.2" fill="#b8328a"/></svg>
<svg style="left:82px;top:514px;filter:blur(0.5px)" width="98.4" height="39.1" viewBox="0 -0.3 98.4 39.1"><rect x="3" y="0" width="11" height="7.8" fill="#d0e3f7"/><rect x="13.7" y="0" width="11" height="7.8" fill="#dceaf9"/><rect x="24.4" y="0" width="11" height="7.8" fill="#e0edfa"/><rect x="35.1" y="0" width="11" height="7.8" fill="#cfe2f6"/><rect x="45.8" y="0" width="11" height="7.8" fill="#e4effb"/><rect x="56.5" y="0" width="11" height="7.8" fill="#dfecfa"/><rect x="67.2" y="0" width="11" height="7.8" fill="#dfecfa"/><rect x="77.9" y="0" width="11" height="7.8" fill="#f3f5fa"/><rect x="3" y="7.5" width="11" height="10.3" fill="#aacdf0"/><rect x="13.7" y="7.5" width="11" height="10.3" fill="#8fbce9"/><rect x="24.4" y="7.5" width="11" height="10.3" fill="#b5d3f1"/><rect x="35.1" y="7.5" width="11" height="10.3" fill="#8fbce9"/><rect x="45.8" y="7.5" width="11" height="10.3" fill="#93beea"/><rect x="56.5" y="7.5" width="11" height="10.3" fill="#9dc4ec"/><rect x="67.2" y="7.5" width="11" height="10.3" fill="#8fbce9"/><rect x="77.9" y="7.5" width="11" height="10.3" fill="#b5d3f1"/><rect x="3" y="17.5" width="11" height="11.1" fill="#f5f3f3"/><rect x="13.7" y="17.5" width="11" height="11.1" fill="#ededf0"/><rect x="24.4" y="17.5" width="11" height="11.1" fill="#f3f3f6"/><rect x="35.1" y="17.5" width="11" height="11.1" fill="#f3f3f6"/><rect x="45.8" y="17.5" width="11" height="11.1" fill="#f3f3f6"/><rect x="56.5" y="17.5" width="11" height="11.1" fill="#f1f1f4"/><rect x="67.2" y="17.5" width="11" height="11.1" fill="#f3f3f6"/><rect x="77.9" y="17.5" width="11" height="11.1" fill="#f3f1f1"/><rect x="0" y="28.3" width="3.3" height="11.1" fill="#f1f1f4"/><rect x="3" y="28.3" width="11" height="11.1" fill="#d5d6da"/><rect x="13.7" y="28.3" width="11" height="11.1" fill="#c4c5cb"/><rect x="24.4" y="28.3" width="11" height="11.1" fill="#d3d4d9"/><rect x="35.1" y="28.3" width="11" height="11.1" fill="#d3d4d9"/><rect x="45.8" y="28.3" width="11" height="11.1" fill="#c6c7cd"/><rect x="56.5" y="28.3" width="11" height="11.1" fill="#d0d1d6"/><rect x="67.2" y="28.3" width="11" height="11.1" fill="#d0d1d6"/><rect x="77.9" y="28.3" width="11" height="11.1" fill="#d3d4d9"/><rect x="88.6" y="28.3" width="10.1" height="11.1" fill="#f0f0f4"/></svg>
<span class="t " style="left:337px;top:514px;font-size:14.6px;color:#6c6e79;letter-spacing:0.511px;">No data available</span>
<span class="t " style="left:653.3px;top:513.9px;font-size:15.4px;color:#191b23;font-weight:700;letter-spacing:1.004px;">265</span>
<span class="t " style="left:691px;top:514.1px;font-size:14.5px;color:#d1002f;letter-spacing:-0.334px;">-21.13%</span>
<span class="t " style="left:970.3px;top:513.9px;font-size:15.4px;color:#191b23;font-weight:700;letter-spacing:0.572px;">26</span>
<span class="t " style="left:998px;top:514.1px;font-size:14.5px;color:#007c65;letter-spacing:0.559px;">+73.33%</span>
<span class="t " style="left:1286.3px;top:513.9px;font-size:15.4px;color:#191b23;font-weight:700;letter-spacing:0.259px;">3.69%</span>
<span class="t " style="left:1341px;top:514.1px;font-size:14.5px;color:#007c65;letter-spacing:0.328px;">+1.63</span>
<div class="card" style="left:7px;top:586px;width:1583px;height:225px"></div>
<span class="t " style="left:29px;top:598.4px;font-size:17.3px;color:#0e0f14;font-weight:700;letter-spacing:-0.161px;">LinkedIn</span>
<div class="b" style="left:7px;top:628px;width:1583px;height:45px;background:#e0e1e9;"></div>
<div class="b" style="left:7px;top:629px;width:1583px;height:44px;background:#f4f5f9;"></div>
<div class="b" style="left:323px;top:629px;width:317px;height:44px;background:#e0e1e9;"></div>
<div class="b" style="left:956px;top:629px;width:1px;height:44px;background:#e0e1e9;"></div>
<div class="b" style="left:1272px;top:629px;width:1px;height:44px;background:#e0e1e9;"></div>
<span class="t " style="left:29px;top:641px;font-size:12.5px;color:#191b23;letter-spacing:0.566px;">Company page</span>
<span class="t " style="left:337px;top:641px;font-size:12.5px;color:#191b23;letter-spacing:0.600px;">New followers</span>
<svg style="left:428px;top:641px" width="18" height="16" viewBox="-0.3 -0.6 18 16"><path d="M0.4,4.6 H8 M2.5,8.2 H8 M4.6,11.7 H8" stroke="#a6a9b4" stroke-width="1.6" fill="none"/><path d="M13.5,14.2 V2 M10,5.6 L13.5,1.8 L17,5.6" stroke="#a0a3af" stroke-width="1.5" fill="none" stroke-linecap="round" stroke-linejoin="round"/></svg>
<span class="t " style="left:653px;top:641px;font-size:12.5px;color:#191b23;letter-spacing:0.460px;">Posts reach (organic)</span>
<svg style="left:787px;top:641px" width="18" height="16" viewBox="-0.3 -0.6 18 16"><path d="M0.4,4.6 H8 M2.5,8.2 H8 M4.6,11.7 H8" stroke="#a6a9b4" stroke-width="1.6" fill="none"/><path d="M13.5,14.2 V2 M10,5.6 L13.5,1.8 L17,5.6" stroke="#a0a3af" stroke-width="1.5" fill="none" stroke-linecap="round" stroke-linejoin="round"/></svg>
<span class="t " style="left:970px;top:641px;font-size:12.5px;color:#191b23;letter-spacing:0.489px;">Posts engagements (organic)</span>
<svg style="left:1152px;top:641px" width="18" height="16" viewBox="-0.3 -0.6 18 16"><path d="M0.4,4.6 H8 M2.5,8.2 H8 M4.6,11.7 H8" stroke="#a6a9b4" stroke-width="1.6" fill="none"/><path d="M13.5,14.2 V2 M10,5.6 L13.5,1.8 L17,5.6" stroke="#a0a3af" stroke-width="1.5" fill="none" stroke-linecap="round" stroke-linejoin="round"/></svg>
<span class="t " style="left:1286px;top:641px;font-size:12.5px;color:#191b23;letter-spacing:0.471px;">Engagement rate (organic)</span>
<svg style="left:1452px;top:641px" width="18" height="16" viewBox="-0.3 -0.6 18 16"><path d="M0.4,4.6 H8 M2.5,8.2 H8 M4.6,11.7 H8" stroke="#a6a9b4" stroke-width="1.6" fill="none"/><path d="M13.5,14.2 V2 M10,5.6 L13.5,1.8 L17,5.6" stroke="#a0a3af" stroke-width="1.5" fill="none" stroke-linecap="round" stroke-linejoin="round"/></svg>
<div class="b" style="left:7px;top:741px;width:1583px;height:1px;background:#e6e7ec;"></div>
<div class="b" style="left:83px;top:733px;width:157px;height:12px;background:#fff;"></div>
<div class="b" style="left:28.7px;top:685.8px;width:42.4px;height:42.4px;border-radius:50%;background:#f4f5f9;box-sizing:border-box;border:1px solid #dddee4"></div>
<span class="t ini" style="left:38.95px;top:696.6px;font-size:15.8px;color:#0f1015;letter-spacing:-0.050px;">DE</span>
<svg style="left:52px;top:708px" width="24" height="23" viewBox="0 -0.9 24 23"><rect x="0" y="0" width="24" height="23" rx="3" fill="#fff"/><rect x="1" y="1" width="22" height="21" rx="2.2" fill="#0a66c2"/><text x="12" y="18.8" font-family="Liberation Sans, sans-serif" font-weight="700" font-size="17.6" fill="#fff" text-anchor="middle" textLength="16.2" lengthAdjust="spacingAndGlyphs">in</text></svg>
<div class="b" style="left:28.7px;top:755.2px;width:42.4px;height:42.4px;border-radius:50%;background:#f4f5f9;box-sizing:border-box;border:1px solid #dddee4"></div>
<span class="t ini" style="left:38.45px;top:766px;font-size:15.8px;color:#0f1015;letter-spacing:-0.800px;">OR</span>
<svg style="left:52px;top:778px" width="24" height="23" viewBox="0 -0.2 24 23"><rect x="0" y="0" width="24" height="23" rx="3" fill="#fff"/><rect x="1" y="1" width="22" height="21" rx="2.2" fill="#0a66c2"/><text x="12" y="18.8" font-family="Liberation Sans, sans-serif" font-weight="700" font-size="17.6" fill="#fff" text-anchor="middle" textLength="16.2" lengthAdjust="spacingAndGlyphs">in</text></svg>
<svg style="left:83px;top:689px;filter:blur(0.5px)" width="142.8" height="36.8" viewBox="-0.2 0 142.8 36.8"><rect x="0" y="0" width="11.3" height="18.8" fill="#dcebf9"/><rect x="11" y="0" width="19.1" height="18.8" fill="#a9cbee"/><rect x="29.8" y="0" width="19.1" height="18.8" fill="#b9d5f1"/><rect x="48.6" y="0" width="19.1" height="18.8" fill="#a9cbee"/><rect x="67.4" y="0" width="19.1" height="18.8" fill="#c3dbf3"/><rect x="86.2" y="0" width="19.1" height="18.8" fill="#b9d5f1"/><rect x="105" y="0" width="19.1" height="18.8" fill="#adcdee"/><rect x="123.8" y="0" width="19.3" height="18.8" fill="#bdd7f2"/><rect x="0" y="18.5" width="11.3" height="18.6" fill="#e6e8ee"/><rect x="11" y="18.5" width="19.1" height="18.6" fill="#dcdcdf"/><rect x="29.8" y="18.5" width="19.1" height="18.6" fill="#e4e4e7"/><rect x="48.6" y="18.5" width="19.1" height="18.6" fill="#e2e2e5"/><rect x="67.4" y="18.5" width="19.1" height="18.6" fill="#e4e4e7"/></svg>
<svg style="left:83px;top:745px;filter:blur(0.5px)" width="154.8" height="52.6" viewBox="-0.2 -0.4 154.8 52.6"><rect x="11" y="0" width="132.1" height="18.8" fill="#e3f0fc"/><rect x="0" y="18.5" width="11.3" height="18.5" fill="#e0ecf9"/><rect x="11" y="18.5" width="19.1" height="18.5" fill="#b0cdee"/><rect x="29.8" y="18.5" width="19.1" height="18.5" fill="#a9cbee"/><rect x="48.6" y="18.5" width="19.1" height="18.5" fill="#c5dbf3"/><rect x="67.4" y="18.5" width="19.1" height="18.5" fill="#b0cdee"/><rect x="86.2" y="18.5" width="19.1" height="18.5" fill="#bdd5f1"/><rect x="105" y="18.5" width="19.1" height="18.5" fill="#bdd5f1"/><rect x="123.8" y="18.5" width="19.3" height="18.5" fill="#c3d9f2"/><rect x="0" y="36.7" width="11.3" height="16.2" fill="#ececf0"/><rect x="11" y="36.7" width="19.1" height="16.2" fill="#eee8e6"/><rect x="29.8" y="36.7" width="19.1" height="16.2" fill="#ededf0"/><rect x="48.6" y="36.7" width="19.1" height="16.2" fill="#e8e6e6"/><rect x="67.4" y="36.7" width="19.1" height="16.2" fill="#f5f0ee"/><rect x="86.2" y="36.7" width="19.1" height="16.2" fill="#e6e2e2"/><rect x="105" y="36.7" width="19.1" height="16.2" fill="#f6f3f2"/><rect x="123.8" y="36.7" width="19.3" height="16.2" fill="#e6e4e4"/><rect x="142.8" y="36.7" width="12.3" height="16.2" fill="#f5f5f7"/></svg>
<span class="t " style="left:337.3px;top:686.4px;font-size:14.93px;color:#191b23;font-weight:700;letter-spacing:0.128px;">74</span>
<span class="t " style="left:363.5px;top:686.6px;font-size:14.5px;color:#6c6e79;letter-spacing:0.659px;">no change</span>
<span class="t " style="left:337.3px;top:755.4px;font-size:15.4px;color:#a3a5b0;font-weight:700;letter-spacing:0.136px;">0</span>
<span class="t " style="left:356px;top:755.6px;font-size:14.5px;color:#6c6e79;letter-spacing:0.659px;">no change</span>
<span class="t " style="left:653px;top:687px;font-size:15.8px;color:#a9abb6;font-weight:700;letter-spacing:0.336px;">n/a</span>
<span class="t " style="left:970px;top:687px;font-size:15.8px;color:#a9abb6;font-weight:700;letter-spacing:0.336px;">n/a</span>
<span class="t " style="left:1286px;top:687px;font-size:15.8px;color:#a9abb6;font-weight:700;letter-spacing:0.336px;">n/a</span>
<span class="t " style="left:653px;top:756px;font-size:15.8px;color:#a9abb6;font-weight:700;letter-spacing:0.336px;">n/a</span>
<span class="t " style="left:970px;top:756px;font-size:15.8px;color:#a9abb6;font-weight:700;letter-spacing:0.336px;">n/a</span>
<span class="t " style="left:1286px;top:756px;font-size:15.8px;color:#a9abb6;font-weight:700;letter-spacing:0.336px;">n/a</span>
<svg style="left:653px;top:529px" width="290" height="36" viewBox="0 -26.5 290 36"><path d="M0,0 L1.5,0.0 L2.3,-13.1 L3.3,-13.1 L5.3,-1.1 L7.3,-3.7 L8.3,-3.7 L9.5,-1.1 L10.7,-13.1 L11.7,-13.1 L14.2,-1.3 L16.6,-4.2 L17.6,-4.2 L19.0,-1.3 L20.4,-8.4 L21.4,-8.4 L22.5,-2.5 L23.7,-8.9 L24.7,-8.9 L27.4,-1.4 L30.2,-4.7 L31.2,-4.7 L32.1,-1.4 L33.0,-5.6 L34.0,-5.6 L34.7,-1.1 L35.4,-3.7 L36.4,-3.7 L37.2,0.0 L44.4,0.0 L45.2,-3.3 L46.2,-3.3 L48.0,-1.0 L49.9,-4.7 L50.9,-4.7 L52.0,-1.1 L53.2,-3.7 L54.2,-3.7 L57.2,-1.1 L60.2,-4.2 L61.2,-4.2 L62.4,-1.3 L63.5,-4.2 L64.5,-4.2 L66.1,-1.3 L67.7,-8.0 L68.7,-8.0 L69.5,0.0 L75.4,0.0 L76.2,-9.8 L77.2,-9.8 L79.8,-0.7 L82.3,-2.3 L83.3,-2.3 L84.7,-0.7 L86.0,-5.2 L87.0,-5.2 L88.4,-1.6 L89.8,-5.2 L90.8,-5.2 L92.2,-0.7 L93.5,-2.3 L94.5,-2.3 L95.3,0.0 L100.7,0.0 L101.5,-5.6 L102.5,-5.6 L104.3,-1.7 L106.2,-9.8 L107.2,-9.8 L108.0,0.0 L114.0,0.0 L114.8,-11.2 L115.8,-11.2 L118.2,-3.4 L120.7,-14.5 L121.7,-14.5 L123.6,-1.3 L125.4,-4.2 L126.4,-4.2 L128.2,-1.3 L130.1,-4.2 L131.1,-4.2 L133.6,-1.3 L136.1,-5.2 L137.1,-5.2 L139.6,-1.6 L142.2,-7.0 L143.2,-7.0 L144.7,-1.3 L146.2,-4.2 L147.2,-4.2 L148.3,-0.8 L149.5,-2.8 L150.5,-2.8 L153.0,-0.8 L155.5,-5.6 L156.5,-5.6 L157.4,-1.7 L158.4,-6.1 L159.4,-6.1 L160.3,-1.6 L161.2,-5.2 L162.2,-5.2 L163.3,-1.6 L164.5,-6.6 L165.5,-6.6 L167.6,-0.6 L169.6,-1.9 L170.6,-1.9 L172.0,-0.6 L173.4,-2.3 L174.4,-2.3 L177.2,-0.7 L179.9,-6.1 L180.9,-6.1 L182.9,-1.8 L184.8,-8.0 L185.8,-8.0 L187.8,-0.7 L189.8,-2.3 L190.8,-2.3 L192.4,-0.7 L194.0,-5.6 L195.0,-5.6 L195.8,0.0 L200.7,0.0 L201.5,-1.9 L202.5,-1.9 L203.8,-0.6 L205.2,-3.3 L206.2,-3.3 L207.6,-1.0 L209.0,-5.2 L210.0,-5.2 L211.8,-1.4 L213.7,-4.7 L214.7,-4.7 L216.8,-1.4 L218.8,-6.1 L219.8,-6.1 L221.7,-1.8 L223.5,-6.1 L224.5,-6.1 L225.3,0.0 L230.2,0.0 L231.0,-5.2 L232.0,-5.2 L233.6,-0.7 L235.2,-2.3 L236.2,-2.3 L238.8,-0.7 L241.3,-3.3 L242.3,-3.3 L244.2,-1.0 L246.0,-5.6 L247.0,-5.6 L248.6,-0.7 L250.2,-2.3 L251.2,-2.3 L253.3,-0.7 L255.4,-5.6 L256.4,-5.6 L257.8,-0.6 L259.1,-1.9 L260.1,-1.9 L260.9,0.0 L266.3,0.0 L267.1,-1.4 L268.1,-1.4 L268.9,0.0 L280.4,0.0 L281.2,-4.7 L282.2,-4.7 L283.5,-0.6 L284.9,-1.9 L285.9,-1.9 L287.3,-0.6 L288.7,-2.3 L289.7,-2.3 L290.5,0.0 L290,0 Z" fill="#2bb3ff" stroke="#2bb3ff" stroke-width="1" stroke-linejoin="round"/></svg>
<svg style="left:970px;top:529px" width="290" height="36" viewBox="0 -26.5 290 36"><path d="M0,0 L2.5,0.0 L3.4,-3.0 L4.6,-3.0 L5.5,0.0 L15.6,0.0 L16.4,-3.0 L17.6,-3.0 L18.4,0.0 L30.6,0.0 L31.4,-3.0 L32.6,-3.0 L33.5,0.0 L45.5,0.0 L46.4,-3.0 L47.6,-3.0 L48.5,0.0 L66.5,0.0 L67.4,-7.0 L68.6,-7.0 L69.5,0.0 L74.5,0.0 L75.4,-7.0 L76.6,-7.0 L77.5,0.0 L117.5,0.0 L118.4,-3.0 L119.6,-3.0 L120.5,0.0 L125.5,0.0 L126.4,-3.0 L127.6,-3.0 L128.4,0.0 L164.6,0.0 L165.4,-4.0 L166.6,-4.0 L167.4,0.0 L178.6,0.0 L179.4,-12.5 L180.6,-12.5 L181.4,0.0 L211.5,0.0 L212.5,-4.0 L215.5,-4.0 L216.5,0.0 L240.6,0.0 L241.4,-7.0 L242.6,-7.0 L243.4,0.0 L290,0 Z" fill="#2bb3ff" stroke="#2bb3ff" stroke-width="1" stroke-linejoin="round"/></svg>
<svg style="left:1287px;top:529px" width="281" height="36" viewBox="0 -26.5 281 36"><path d="M0,0 L6.3,0.0 L7.3,-11.0 L8.7,-11.0 L9.7,0.0 L15.6,0.0 L16.4,-5.4 L17.6,-5.4 L18.4,0.0 L30.6,0.0 L31.4,-5.0 L32.6,-5.0 L33.5,0.0 L42.5,0.0 L43.4,-5.0 L44.6,-5.0 L45.5,0.0 L64.5,0.0 L65.4,-6.0 L66.6,-6.0 L67.5,0.0 L73.5,0.0 L74.4,-5.0 L75.6,-5.0 L76.5,0.0 L113.5,0.0 L114.4,-10.0 L115.6,-10.0 L116.5,0.0 L122.5,0.0 L123.4,-10.0 L124.6,-10.0 L125.5,0.0 L159.6,0.0 L160.4,-4.0 L161.6,-4.0 L162.4,0.0 L173.6,0.0 L174.4,-19.5 L175.6,-19.5 L176.4,0.0 L205.6,0.0 L206.4,-7.0 L207.6,-7.0 L208.4,0.0 L207.6,0.0 L208.4,-10.0 L209.6,-10.0 L210.4,0.0 L233.6,0.0 L234.4,-17.5 L235.6,-17.5 L236.4,0.0 L281,0 Z" fill="#2bb3ff" stroke="#2bb3ff" stroke-width="1" stroke-linejoin="round"/></svg>
<svg style="left:337px;top:697px" width="290" height="36" viewBox="0 -26 290 36"><path d="M0,0 L0.0,0.9 L1.9,0.8 L3.8,0.1 L5.7,0.0 L7.6,0.0 L9.5,0.0 L11.4,-0.2 L13.3,0.7 L15.2,0.6 L17.1,0.0 L19.0,0.0 L20.9,0.0 L22.8,0.0 L24.7,0.4 L26.6,0.0 L28.5,0.0 L30.4,0.0 L32.3,0.0 L34.2,-0.4 L36.1,0.0 L38.0,0.0 L39.9,-0.1 L41.8,-1.3 L43.7,0.0 L45.6,0.0 L47.5,-1.2 L49.4,0.0 L51.3,0.0 L53.2,0.0 L55.1,0.0 L57.0,-0.4 L58.9,0.8 L60.8,-0.9 L62.7,1.0 L64.6,0.0 L66.5,-0.2 L68.4,0.0 L70.3,-1.4 L72.2,0.1 L74.1,-0.5 L76.0,0.2 L77.9,0.0 L79.8,-0.3 L81.7,0.0 L83.6,1.0 L85.5,-0.8 L87.4,0.0 L89.3,0.3 L91.2,-0.0 L93.1,-0.6 L95.0,0.0 L96.9,0.0 L98.8,0.0 L100.7,0.0 L102.6,0.4 L104.5,0.0 L106.4,0.0 L108.3,-1.3 L110.2,0.0 L112.1,0.0 L114.0,0.7 L115.9,0.8 L117.8,-1.3 L119.7,1.1 L121.6,0.7 L123.8,0.0 L124.8,-4.5 L125.2,-4.5 L126.2,0.0 L127.3,-1.4 L129.2,0.6 L131.1,1.0 L133.0,-0.6 L134.9,1.1 L136.8,0.0 L138.7,-1.4 L139.8,0.0 L140.8,-5.5 L141.2,-5.5 L142.2,0.0 L142.5,0.0 L144.4,-1.4 L146.3,0.0 L148.2,0.1 L150.1,0.1 L152.0,-1.1 L153.9,0.0 L155.8,0.0 L157.7,0.5 L159.6,0.6 L161.5,-1.1 L163.4,1.0 L165.3,0.0 L167.2,0.0 L169.1,0.0 L171.0,-1.2 L172.9,0.0 L174.8,0.0 L176.7,0.0 L178.6,0.0 L180.5,0.6 L182.4,0.0 L184.3,0.0 L186.2,0.0 L188.1,-0.5 L190.0,0.0 L191.9,0.0 L193.8,0.0 L195.7,0.0 L197.6,0.0 L199.5,0.0 L201.4,-1.2 L203.3,0.0 L205.2,-1.4 L207.1,0.0 L209.0,0.0 L210.9,-1.2 L212.4,0.0 L213.2,-6.0 L213.8,-6.0 L214.6,0.0 L216.6,0.7 L217.4,0.0 L218.4,-15.4 L218.9,-15.4 L220.0,0.0 L220.4,0.0 L222.3,0.0 L224.0,0.0 L224.9,-6.0 L225.4,-6.0 L226.4,0.0 L228.0,0.0 L229.9,-1.1 L231.8,-0.9 L233.7,0.0 L235.6,0.0 L236.3,0.0 L237.2,-5.0 L237.8,-5.0 L238.7,0.0 L239.4,0.0 L241.3,-0.6 L242.3,0.0 L243.2,-4.0 L243.8,-4.0 L244.7,0.0 L245.1,0.0 L247.0,0.0 L248.9,0.0 L250.8,1.1 L252.7,0.0 L254.6,0.0 L256.5,0.0 L258.4,0.0 L260.3,0.2 L261.0,0.0 L261.8,-3.0 L262.2,-3.0 L263.0,0.0 L264.1,0.0 L266.0,-1.0 L267.9,0.0 L269.8,-0.2 L271.7,-0.9 L273.6,0.6 L275.5,0.0 L277.4,0.0 L279.3,0.9 L281.2,0.0 L283.1,0.0 L285.0,0.0 L286.9,-1.1 L288.8,0.0 L290,0" fill="none" stroke="#2bb3ff" stroke-width="1.9" stroke-linejoin="round" stroke-linecap="round"/></svg>
<svg style="left:653px;top:702px" width="290" height="36" viewBox="0 -26 290 36"><path d="M0,0 L3.6,-5.6 L6.1,-1.2 L8.5,-3.8 L11.0,-6.6 L13.3,-1.5 L15.7,-11.2 L18.3,-1.2 L20.9,-5.2 L24.0,-1.2 L27.2,-3.9 L30.3,-6.1 L33.1,-0.9 L35.9,-5.6 L38.2,-1.2 L40.6,-10.3 L43.1,-1.3 L45.6,-4.0 L48.1,-5.6 L50.5,-0.9 L53.0,-3.6 L55.5,-0.9 L57.9,-4.2 L59.5,-1.4 L61.2,-3.3 L63.7,-1.4 L66.2,-3.4 L68.7,-4.7 L71.5,-1.6 L74.3,-4.7 L76.7,-1.6 L79.0,-3.9 L81.4,-15.5 L83.9,-1.3 L86.3,-3.5 L88.8,-8.0 L91.2,-0.8 L93.5,-7.0 L96.0,-1.2 L98.5,-3.4 L101.0,-5.2 L103.8,-1.0 L106.7,-3.6 L109.5,-14.5 L111.3,-0.8 L113.2,-10.8 L115.4,-1.2 L117.6,-3.8 L119.8,-8.4 L120.9,-1.5 L122.1,-9.4 L124.7,-1.2 L127.3,-14.5 L129.8,-1.3 L132.4,-5.6 L134.8,-1.2 L137.1,-3.9 L139.5,-7.0 L142.6,-1.2 L145.7,-8.4 L148.2,-1.0 L150.7,-4.2 L153.2,-11.2 L155.7,-1.6 L158.2,-4.1 L160.7,-5.6 L163.1,-1.4 L165.4,-15.5 L167.8,-1.1 L170.1,-4.7 L172.7,-1.0 L175.3,-3.6 L178.0,-0.9 L180.6,-4.0 L183.2,-6.6 L185.7,-1.1 L188.2,-4.1 L190.7,-4.7 L193.5,-1.1 L196.4,-4.2 L199.2,-6.6 L201.4,-1.5 L203.5,-3.4 L205.7,-12.2 L208.8,-1.0 L211.8,-11.2 L214.4,-1.5 L217.0,-9.4 L219.5,-1.2 L222.0,-4.2 L224.5,-7.5 L227.0,-1.1 L229.5,-3.5 L232.0,-5.6 L234.5,-1.3 L237.0,-4.0 L239.5,-13.6 L241.3,-1.0 L243.2,-8.9 L246.0,-0.9 L248.8,-8.4 L250.7,-1.1 L252.6,-7.5 L255.4,-1.6 L258.2,-6.6 L261.0,-1.4 L263.8,-5.6 L266.4,-0.9 L269.0,-9.4 L272.1,-1.0 L275.1,-5.6 L277.6,-0.9 L280.1,-3.4 L282.6,-8.9 L285.4,-1.4 L288.2,-10.8 L290,0" fill="none" stroke="#2bb3ff" stroke-width="1.9" stroke-linejoin="round" stroke-linecap="round"/></svg>
<svg style="left:970px;top:697px" width="290" height="36" viewBox="0 -26 290 36"><path d="M0,0 L2.5,0.0 L3.5,-6.1 L4.5,-6.1 L5.5,0.0 L9.0,0.0 L10.0,-3.7 L11.0,-3.7 L12.0,0.0 L13.7,0.0 L14.7,-3.7 L15.7,-3.7 L16.7,0.0 L25.0,0.0 L26.0,-6.1 L27.0,-6.1 L28.1,-0.6 L29.2,-4.2 L30.2,-4.2 L31.2,0.0 L34.5,0.0 L35.6,-15.5 L36.6,-15.5 L37.7,0.0 L40.0,0.0 L41.0,-9.8 L42.0,-9.8 L42.9,-0.9 L43.8,-6.1 L44.8,-6.1 L45.8,0.0 L45.6,0.0 L46.6,4.2 L47.6,4.2 L48.6,0.0 L48.4,0.0 L49.4,-10.3 L50.4,-10.3 L51.5,-0.7 L52.7,-4.7 L53.7,-4.7 L54.7,0.0 L58.7,0.0 L59.7,-2.3 L60.7,-2.3 L61.7,0.0 L63.1,0.0 L64.2,-10.3 L65.2,-10.3 L66.3,0.0 L68.5,0.0 L69.5,-2.3 L70.5,-2.3 L72.0,-0.3 L73.5,-6.6 L74.5,-6.6 L75.5,0.0 L78.6,0.0 L79.8,-10.3 L80.8,-10.3 L81.9,-1.2 L83.1,-8.0 L84.1,-8.0 L85.1,0.0 L87.8,0.0 L88.8,-4.2 L89.8,-4.2 L90.8,0.0 L92.4,0.0 L93.4,-7.0 L94.4,-7.0 L95.4,0.0 L97.6,0.0 L98.6,-3.7 L99.6,-3.7 L100.6,0.0 L107.0,0.0 L108.0,-3.7 L109.0,-3.7 L110.0,0.0 L115.4,0.0 L116.4,-3.7 L117.4,-3.7 L118.4,0.0 L120.1,0.0 L121.1,-2.8 L122.1,-2.8 L123.1,0.0 L129.5,0.0 L130.5,3.3 L131.5,3.3 L132.5,0.0 L132.7,0.0 L133.7,-4.7 L134.7,-4.7 L135.7,0.0 L137.4,0.0 L138.4,-6.6 L139.4,-6.6 L140.4,0.0 L142.8,0.0 L143.8,-3.7 L144.8,-3.7 L145.8,0.0 L152.2,0.0 L153.2,-6.1 L154.2,-6.1 L155.2,0.0 L159.7,0.0 L160.7,-4.7 L161.7,-4.7 L162.8,-0.7 L164.0,-7.0 L165.0,-7.0 L165.7,-1.1 L166.3,-8.4 L167.3,-8.4 L168.3,0.0 L170.5,0.0 L171.5,-1.9 L172.5,-1.9 L173.5,0.0 L179.4,0.0 L180.4,-4.2 L181.4,-4.2 L182.3,-0.3 L183.2,-1.9 L184.2,-1.9 L185.2,0.0 L188.8,0.0 L189.8,-1.9 L190.8,-1.9 L191.7,-0.3 L192.6,-1.9 L193.6,-1.9 L194.6,0.0 L196.5,0.0 L197.5,-5.6 L198.5,-5.6 L199.5,0.0 L203.4,0.0 L204.5,-15.5 L205.5,-15.5 L206.3,-0.6 L207.1,-3.7 L208.1,-3.7 L209.5,-0.4 L210.9,-2.8 L211.9,-2.8 L212.9,0.0 L215.5,0.0 L216.5,-6.1 L217.5,-6.1 L218.4,-0.6 L219.3,-4.2 L220.3,-4.2 L221.3,0.0 L223.8,0.0 L224.9,-7.5 L225.9,-7.5 L227.0,0.0 L229.5,0.0 L230.5,-1.9 L231.5,-1.9 L232.5,0.0 L236.1,0.0 L237.1,-4.7 L238.1,-4.7 L238.6,-0.7 L239.0,-10.3 L240.0,-10.3 L241.0,0.0 L243.6,0.0 L244.6,-1.9 L245.6,-1.9 L246.9,-0.3 L248.2,-11.7 L249.2,-11.7 L250.2,-1.0 L251.2,-6.6 L252.2,-6.6 L253.2,0.0 L254.4,0.0 L255.4,-8.9 L256.4,-8.9 L257.6,-0.7 L258.7,-4.7 L259.7,-4.7 L260.8,-0.7 L261.9,-10.3 L262.9,-10.3 L263.9,-1.5 L265.0,-14.1 L266.0,-14.1 L267.0,0.0 L270.3,0.0 L271.3,-4.7 L272.3,-4.7 L273.7,-0.7 L275.1,-6.1 L276.1,-6.1 L277.0,-0.6 L277.9,-4.2 L278.9,-4.2 L279.9,0.0 L282.5,0.0 L283.5,-10.3 L284.5,-10.3 L285.5,0.0 L285.8,0.0 L286.8,2.8 L287.8,2.8 L288.8,0.0 L287.1,0.0 L288.1,-5.6 L289.1,-5.6 L290.1,0.0 L290,0 Z" fill="#2bb3ff" stroke="#2bb3ff" stroke-width="1.6" stroke-linejoin="round"/></svg>
<svg style="left:1287px;top:696px" width="281" height="36" viewBox="0 -26.8 281 36"><path d="M0,0 L0.0,0.4 L1.9,0.0 L3.5,0.0 L4.5,-4.3 L5.0,-4.3 L6.0,0.0 L7.6,0.0 L9.5,0.0 L11.4,0.5 L13.3,-0.5 L15.2,0.3 L17.1,0.0 L19.0,0.0 L20.9,0.0 L22.8,-0.7 L24.7,-0.5 L25.1,0.0 L25.8,-1.9 L26.2,-1.9 L26.9,0.0 L28.5,0.2 L30.4,0.0 L32.3,-0.2 L33.5,0.0 L34.1,-2.4 L34.6,-2.4 L35.3,0.0 L36.1,-0.1 L38.0,0.5 L39.1,0.0 L39.8,-4.7 L40.2,-4.7 L40.9,0.0 L41.8,0.2 L43.7,0.0 L45.6,0.0 L46.6,0.0 L47.2,-3.2 L47.8,-3.2 L48.4,0.0 L49.4,0.0 L50.3,0.0 L51.0,-4.7 L51.5,-4.7 L52.1,0.0 L53.2,0.0 L55.1,0.0 L57.0,0.0 L58.9,-0.7 L60.8,0.0 L61.6,0.0 L62.2,-2.4 L62.8,-2.4 L63.4,0.0 L64.6,-0.1 L66.5,-0.3 L68.4,0.0 L70.3,0.0 L72.2,0.0 L74.1,-0.3 L75.7,0.0 L76.3,-1.9 L76.8,-1.9 L77.5,0.0 L77.9,0.0 L79.8,0.0 L81.7,0.0 L83.6,0.0 L85.5,0.0 L87.4,0.0 L89.3,-0.3 L91.2,0.0 L93.1,0.0 L95.0,0.0 L96.9,0.1 L98.8,0.0 L100.7,-0.0 L102.6,0.4 L104.5,-0.4 L106.4,0.3 L108.3,-0.5 L110.2,0.0 L112.1,0.0 L114.0,0.0 L115.9,0.0 L117.8,0.0 L119.7,0.0 L121.6,-0.6 L123.5,0.0 L124.5,0.0 L125.5,-8.4 L126.0,-8.4 L126.9,0.0 L127.4,0.0 L127.8,2.0 L128.2,2.0 L128.6,0.0 L129.2,0.0 L131.1,0.0 L133.0,0.6 L134.9,0.1 L136.8,0.0 L138.7,0.0 L140.6,0.0 L142.5,0.0 L144.4,0.0 L146.3,0.0 L148.2,-0.6 L149.9,0.0 L150.8,4.7 L151.2,4.7 L152.1,0.0 L153.9,0.0 L155.8,0.1 L157.7,-0.2 L159.6,0.5 L161.5,0.4 L163.4,0.5 L165.3,0.4 L167.2,0.1 L169.1,-0.6 L171.0,0.0 L172.9,0.3 L174.8,0.1 L176.7,-0.5 L178.6,0.0 L180.5,0.0 L182.4,0.0 L184.3,0.5 L186.2,0.2 L188.1,0.0 L190.0,0.6 L191.9,0.0 L193.8,0.0 L195.7,-0.1 L197.6,-0.1 L199.5,0.0 L201.4,0.0 L203.3,0.0 L205.2,0.1 L207.1,-0.4 L209.0,0.0 L210.9,0.0 L212.8,0.3 L214.7,0.0 L216.6,0.0 L218.1,0.0 L218.8,-2.4 L219.2,-2.4 L219.9,0.0 L220.4,0.0 L222.3,0.0 L224.2,0.0 L226.1,-0.1 L228.0,0.5 L229.9,0.2 L231.1,0.0 L231.8,-1.9 L232.2,-1.9 L232.9,0.0 L233.7,0.0 L235.6,-0.6 L237.5,0.0 L239.4,0.0 L241.3,0.3 L243.2,0.3 L245.1,-0.2 L247.0,0.0 L248.9,0.0 L250.8,0.0 L252.7,0.0 L254.6,0.0 L256.6,0.0 L257.2,-3.8 L257.8,-3.8 L258.4,0.0 L260.3,0.0 L262.2,0.0 L264.1,0.0 L266.0,-0.4 L267.9,-0.5 L269.8,0.0 L271.7,0.1 L273.6,0.0 L275.5,0.0 L277.4,0.4 L279.3,-0.6 L281,0" fill="none" stroke="#2bb3ff" stroke-width="1.9" stroke-linejoin="round" stroke-linecap="round"/></svg>
<svg style="left:337px;top:761px" width="290" height="36" viewBox="0 -26 290 36"><path d="M0,0 L63.0,0.0 L63.4,-9.0 L65.0,-9.0 L65.4,0.0 L146.6,0.0 L147.0,10.0 L148.6,10.0 L149.0,0.0 L290,0 Z" fill="#2bb3ff" stroke="#2bb3ff" stroke-width="1.9" stroke-linejoin="round"/></svg>
<svg style="left:653px;top:771px" width="290" height="36" viewBox="0 -26 290 36"><path d="M0,0 L13.1,0.0 L14.3,-7.3 L15.3,-7.3 L16.5,0.0 L32.7,0.0 L34.2,-10.6 L35.2,-10.6 L36.7,0.0 L43.1,0.0 L44.1,-9.7 L45.1,-9.7 L46.4,-2.1 L47.6,-20.4 L48.6,-20.4 L49.7,0.0 L52.9,0.0 L53.9,-6.8 L54.9,-6.8 L56.4,-0.9 L57.9,-4.0 L58.9,-4.0 L60.5,-0.9 L62.1,-5.0 L63.1,-5.0 L63.5,-1.1 L64.0,-5.0 L65.0,-5.0 L65.7,-1.1 L66.3,-15.3 L67.3,-15.3 L68.8,0.0 L70.5,0.0 L71.5,-5.0 L72.5,-5.0 L73.7,-1.1 L74.8,-5.0 L75.8,-5.0 L77.4,-0.5 L79.0,-2.2 L80.0,-2.2 L81.6,-0.5 L83.2,-9.7 L84.2,-9.7 L85.8,-0.6 L87.4,-2.6 L88.4,-2.6 L89.4,0.0 L92.0,0.0 L93.0,-7.8 L94.0,-7.8 L94.5,-1.5 L94.9,-6.8 L95.9,-6.8 L96.9,0.0 L104.8,0.0 L106.6,-7.8 L107.6,-7.8 L109.4,0.0 L120.1,0.0 L121.1,-6.8 L122.1,-6.8 L123.2,-0.9 L124.4,-4.0 L125.4,-4.0 L125.8,-0.9 L126.3,-4.5 L127.3,-4.5 L128.3,0.0 L139.8,0.0 L140.8,-4.0 L141.8,-4.0 L143.5,-0.9 L145.2,-4.0 L146.2,-4.0 L147.5,0.0 L152.2,0.0 L153.2,-4.0 L154.2,-4.0 L155.2,0.0 L166.5,0.0 L167.5,-4.0 L168.5,-4.0 L169.5,0.0 L179.4,0.0 L180.4,-4.0 L181.4,-4.0 L182.4,0.0 L196.9,0.0 L197.9,-4.0 L198.9,-4.0 L199.9,0.0 L204.4,0.0 L205.4,-4.0 L206.4,-4.0 L207.4,0.0 L229.6,0.0 L230.7,-4.5 L231.7,-4.5 L232.8,0.0 L254.9,0.0 L256.3,-5.2 L257.3,-5.2 L258.7,0.0 L268.7,0.0 L269.7,-4.0 L270.7,-4.0 L271.7,0.0 L274.2,0.0 L275.5,-2.6 L276.5,-2.6 L277.8,0.0 L283.4,0.0 L284.4,-4.0 L285.4,-4.0 L286.4,0.0 L290,0 Z" fill="#2bb3ff" stroke="#2bb3ff" stroke-width="1" stroke-linejoin="round"/></svg>
<svg style="left:970px;top:766px" width="290" height="36" viewBox="0 -26.3 290 36"><path d="M0,0 L32.5,0.0 L33.5,-11.1 L34.5,-11.1 L35.5,0.0 L36.0,0.0 L37.0,1.5 L38.0,1.5 L39.0,0.0 L37.6,0.0 L38.6,-5.0 L39.6,-5.0 L40.6,0.0 L39.0,0.0 L40.0,2.5 L41.0,2.5 L42.0,0.0 L40.9,0.0 L41.9,-6.4 L42.9,-6.4 L44.0,-0.9 L45.2,-4.0 L46.2,-4.0 L47.4,-0.9 L48.5,-8.7 L49.5,-8.7 L50.5,0.0 L53.4,0.0 L54.1,4.0 L55.1,4.0 L55.8,0.0 L61.5,0.0 L62.5,-15.7 L63.5,-15.7 L64.5,0.0 L64.2,0.0 L64.7,3.5 L65.7,3.5 L66.2,0.0 L66.2,0.0 L67.2,-4.5 L68.2,-4.5 L69.2,0.0 L72.3,0.0 L73.3,-5.9 L74.3,-5.9 L75.3,0.0 L81.7,0.0 L82.7,-10.6 L83.7,-10.6 L84.6,-1.7 L85.5,-7.8 L86.5,-7.8 L87.4,-1.2 L88.3,-5.4 L89.3,-5.4 L90.3,0.0 L92.0,0.0 L93.0,-1.7 L94.0,-1.7 L95.0,0.0 L120.1,0.0 L121.1,-1.5 L122.1,-1.5 L123.1,0.0 L126.2,0.0 L127.2,1.1 L128.2,1.1 L129.2,0.0 L254.9,0.0 L255.5,-5.0 L256.5,-5.0 L257.1,0.0 L290,0 Z" fill="#2bb3ff" stroke="#2bb3ff" stroke-width="1.7" stroke-linejoin="round"/></svg>
<svg style="left:1287px;top:766px" width="281" height="36" viewBox="0 -26.3 281 36"><path d="M0,0 L31.4,0.0 L32.9,-1.7 L33.9,-1.7 L35.4,0.0 L43.9,0.0 L44.9,-10.6 L45.9,-10.6 L46.9,0.0 L52.2,0.0 L52.8,-5.0 L53.8,-5.0 L54.4,0.0 L53.5,0.0 L53.9,1.9 L54.7,1.9 L55.1,0.0 L59.3,0.0 L60.1,-6.4 L61.1,-6.4 L61.9,0.0 L61.4,0.0 L61.8,2.5 L62.8,2.5 L63.2,0.0 L70.1,0.0 L71.2,-5.0 L72.2,-5.0 L73.3,0.0 L76.4,0.0 L77.5,-5.0 L78.5,-5.0 L79.6,0.0 L82.9,0.0 L83.7,-15.7 L84.7,-15.7 L85.5,0.0 L84.9,0.0 L85.2,1.9 L85.9,1.9 L86.3,0.0 L89.2,0.0 L89.9,-2.6 L90.9,-2.6 L91.6,0.0 L281,0 Z" fill="#2bb3ff" stroke="#2bb3ff" stroke-width="1.7" stroke-linejoin="round"/></svg>
</body>
</html>
